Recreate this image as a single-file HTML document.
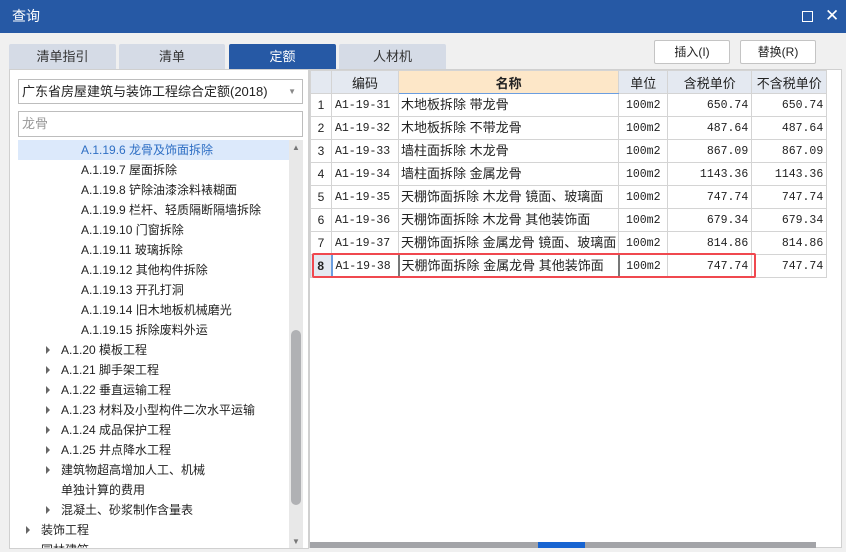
<!DOCTYPE html>
<html><head><meta charset="utf-8"><style>
*{margin:0;padding:0;box-sizing:border-box}
body{width:846px;height:552px;overflow:hidden;background:#f0f0f0;font-family:"Liberation Sans","Noto Sans CJK SC",sans-serif;font-size:12px;color:#222;position:relative}
.abs{position:absolute}
.title{left:0;top:0;width:846px;height:33px;background:#2659a5;color:#fff;font-size:14px;line-height:33px;padding-left:12px}
.tab{top:44px;height:25px;background:#d5dbe6;text-align:center;line-height:25px;font-size:13px;color:#333;border-radius:2px 2px 0 0}
.btn{top:40px;height:24px;width:76px;background:#fff;border:1px solid #c4c4c4;border-radius:2px;text-align:center;line-height:22px;font-size:12px}
.left{left:9px;top:69px;width:300px;height:480px;background:#fff;border:1px solid #d0d0d0}
.tree{position:absolute;left:0;top:0;width:290px;height:548px;overflow:hidden}
.tree div{position:absolute;height:20px;line-height:20px;white-space:nowrap;font-size:12px}
.arr{position:absolute;width:0;height:0;border-left:4px solid #666;border-top:4px solid transparent;border-bottom:4px solid transparent}
table{border-collapse:collapse;position:absolute;left:310px;top:70px;font-size:12px;table-layout:fixed}
td{border:1px solid #d4d4d4;height:23px;padding:0 3px;white-space:nowrap;vertical-align:middle;line-height:16px;overflow:hidden}
td.n{font-size:13px;padding:0 2px}
th{background:#e4e9f1;border:1px solid #d4d4d4;height:23px;font-weight:normal;font-size:13px}
.m{font-family:"Liberation Mono","Noto Sans CJK SC",monospace;font-size:11.5px;padding-top:2px}
.r{text-align:right}.c{text-align:center}
</style></head><body>
<div class="abs title">查询</div>
<div class="abs" style="left:802px;top:11px;width:11px;height:11px;border:1.5px solid #fff"></div>
<div class="abs" style="left:825px;top:6px;color:#fff;font-size:17px">✕</div>
<div class="abs tab" style="left:9px;width:107px">清单指引</div>
<div class="abs tab" style="left:119px;width:106px">清单</div>
<div class="abs tab" style="left:229px;width:107px;background:#2659a5;color:#fff">定额</div>
<div class="abs tab" style="left:339px;width:107px">人材机</div>
<div class="abs btn" style="left:654px">插入(I)</div>
<div class="abs btn" style="left:740px">替换(R)</div>
<div class="abs left"></div>
<div class="abs" style="left:18px;top:79px;width:285px;height:25px;border:1px solid #bdbdbd;background:#fff;line-height:23px;padding-left:3px;font-size:13px">广东省房屋建筑与装饰工程综合定额(2018)<span style="position:absolute;right:6px;top:0;color:#888;font-size:8px">▼</span></div>
<div class="abs" style="left:18px;top:111px;width:285px;height:26px;border:1px solid #bdbdbd;background:#fff;line-height:24px;padding-left:3px;font-size:13px;color:#999">龙骨</div>
<div class="abs" style="left:18px;top:140px;width:271px;height:20px;background:#dce9fb"></div>
<div class="abs" style="left:289px;top:140px;width:14px;height:408px;background:#e8e8e8"></div>
<div class="abs" style="left:291px;top:330px;width:10px;height:175px;background:#b0b1b4;border-radius:5px"></div>
<div class="abs" style="left:292px;top:143px;color:#777;font-size:8px">▲</div>
<div class="abs" style="left:292px;top:537px;color:#777;font-size:8px">▼</div>
<div class="tree">
<div style="left:81px;top:140px;color:#2f6fc4">A.1.19.6 龙骨及饰面拆除</div>
<div style="left:81px;top:160px">A.1.19.7 屋面拆除</div>
<div style="left:81px;top:180px">A.1.19.8 铲除油漆涂料裱糊面</div>
<div style="left:81px;top:200px">A.1.19.9 栏杆、轻质隔断隔墙拆除</div>
<div style="left:81px;top:220px">A.1.19.10 门窗拆除</div>
<div style="left:81px;top:240px">A.1.19.11 玻璃拆除</div>
<div style="left:81px;top:260px">A.1.19.12 其他构件拆除</div>
<div style="left:81px;top:280px">A.1.19.13 开孔打洞</div>
<div style="left:81px;top:300px">A.1.19.14 旧木地板机械磨光</div>
<div style="left:81px;top:320px">A.1.19.15 拆除废料外运</div>
<div style="left:61px;top:340px">A.1.20 模板工程</div>
<div style="left:61px;top:360px">A.1.21 脚手架工程</div>
<div style="left:61px;top:380px">A.1.22 垂直运输工程</div>
<div style="left:61px;top:400px">A.1.23 材料及小型构件二次水平运输</div>
<div style="left:61px;top:420px">A.1.24 成品保护工程</div>
<div style="left:61px;top:440px">A.1.25 井点降水工程</div>
<div style="left:61px;top:460px">建筑物超高增加人工、机械</div>
<div style="left:61px;top:480px">单独计算的费用</div>
<div style="left:61px;top:500px">混凝土、砂浆制作含量表</div>
<div style="left:41px;top:520px">装饰工程</div>
<div style="left:41px;top:540px">园林建筑</div>
</div>
<div class="arr" style="left:46px;top:346px"></div><div class="arr" style="left:46px;top:366px"></div><div class="arr" style="left:46px;top:386px"></div><div class="arr" style="left:46px;top:406px"></div><div class="arr" style="left:46px;top:426px"></div><div class="arr" style="left:46px;top:446px"></div><div class="arr" style="left:46px;top:466px"></div><div class="arr" style="left:46px;top:506px"></div><div class="arr" style="left:26px;top:526px"></div>
<div class="abs" style="left:309px;top:69px;width:533px;height:479px;background:#fff;border:1px solid #d0d0d0"></div>
<table>
<colgroup><col style="width:21px"><col style="width:67px"><col style="width:218px"><col style="width:49px"><col style="width:84px"><col style="width:75px"></colgroup>
<tr><th></th><th>编码</th><th style="background:#fde7c8;font-weight:bold;border-bottom:1px solid #6b9ee0">名称</th><th>单位</th><th>含税单价</th><th>不含税单价</th></tr>
<tr><td class="c">1</td><td class="m">A1-19-31</td><td class="n">木地板拆除 带龙骨</td><td class="c m">100m2</td><td class="r m">650.74</td><td class="r m">650.74</td></tr>
<tr><td class="c">2</td><td class="m">A1-19-32</td><td class="n">木地板拆除 不带龙骨</td><td class="c m">100m2</td><td class="r m">487.64</td><td class="r m">487.64</td></tr>
<tr><td class="c">3</td><td class="m">A1-19-33</td><td class="n">墙柱面拆除 木龙骨</td><td class="c m">100m2</td><td class="r m">867.09</td><td class="r m">867.09</td></tr>
<tr><td class="c">4</td><td class="m">A1-19-34</td><td class="n">墙柱面拆除 金属龙骨</td><td class="c m">100m2</td><td class="r m">1143.36</td><td class="r m">1143.36</td></tr>
<tr><td class="c">5</td><td class="m">A1-19-35</td><td class="n">天棚饰面拆除 木龙骨 镜面、玻璃面</td><td class="c m">100m2</td><td class="r m">747.74</td><td class="r m">747.74</td></tr>
<tr><td class="c">6</td><td class="m">A1-19-36</td><td class="n">天棚饰面拆除 木龙骨 其他装饰面</td><td class="c m">100m2</td><td class="r m">679.34</td><td class="r m">679.34</td></tr>
<tr><td class="c">7</td><td class="m">A1-19-37</td><td class="n">天棚饰面拆除 金属龙骨 镜面、玻璃面</td><td class="c m">100m2</td><td class="r m">814.86</td><td class="r m">814.86</td></tr>
<tr><td class="c" style="background:#e4e9f1;font-weight:bold">8</td><td class="m" style="border-left:2px solid #6b9ee0">A1-19-38</td><td class="n" style="border-left:2px solid #777;border-right:2px solid #777">天棚饰面拆除 金属龙骨 其他装饰面</td><td class="c m">100m2</td><td class="r m">747.74</td><td class="r m">747.74</td></tr>
</table>
<div class="abs" style="left:312px;top:253px;width:444px;height:25px;border:2px solid #f0484f;border-radius:2px"></div>
<div class="abs" style="left:310px;top:542px;width:506px;height:6px;background:#a3a4a8"></div>
<div class="abs" style="left:538px;top:542px;width:47px;height:6px;background:#1764d1"></div>
</body></html>
